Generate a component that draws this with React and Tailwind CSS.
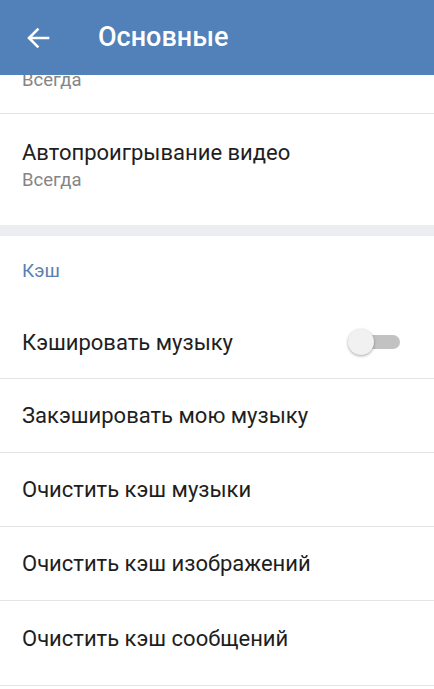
// App.jsx — экран настроек «Основные» (кэш)
import React from "react";

const font = { fontFamily: "Roboto, 'Noto Sans', sans-serif" };

function Row({ title, last }) {
  return (
    <div
      className={`flex h-[74px] items-center px-[22px] ${last ? "" : "border-b border-[#e3e4e6]"}`}
    >
      <span className="text-[22px] text-[#1e1e1e]">{title}</span>
    </div>
  );
}

function Toggle() {
  // выключенный переключатель в стиле Material
  return (
    <div className="relative h-[26px] w-[52px]">
      <div className="absolute left-[8px] top-[6px] h-[14px] w-[44px] rounded-full bg-[#c2c2c2]" />
      <div className="absolute left-0 top-0 h-[26px] w-[26px] rounded-full bg-[#f1f1f1] shadow-[0_1px_3px_rgba(0,0,0,0.35)]" />
    </div>
  );
}

export default function App() {
  return (
    <div className="h-[689px] w-[434px] overflow-hidden bg-white" style={font}>
      {/* Верхняя панель */}
      <div className="relative z-10 flex h-[75px] items-center bg-[#5181b8]">
        <svg
          className="ml-[26px]"
          width="24"
          height="24"
          viewBox="0 0 24 24"
          fill="none"
          stroke="white"
          strokeWidth="2.6"
          strokeLinecap="square"
        >
          <path d="M22 12H3.5M11.5 3.5 3 12l8.5 8.5" />
        </svg>
        <span className="ml-[48px] text-[27px] font-medium text-white">Основные</span>
      </div>

      {/* Частично прокрученная строка */}
      <div className="h-[39px] overflow-hidden border-b border-[#e3e4e6] px-[22px]">
        <div className="-mt-[8px] text-[18.5px] text-[#858585]">Всегда</div>
      </div>

      <div className="h-[111px] px-[22px] pt-[25px]">
        <div className="text-[22px] leading-[28px] text-[#1e1e1e]">Автопроигрывание видео</div>
        <div className="mt-[1px] text-[18.5px] leading-[24px] text-[#858585]">Всегда</div>
      </div>

      {/* Разделитель секций */}
      <div className="h-[11px] bg-[#ebedf0]" />

      {/* Секция «Кэш» */}
      <div className="flex h-[70px] items-center px-[22px]">
        <span className="text-[19px] text-[#5b80ad]">Кэш</span>
      </div>

      <div className="flex h-[73px] items-center justify-between border-b border-[#e3e4e6] pl-[22px] pr-[34px]">
        <span className="text-[22px] text-[#1e1e1e]">Кэшировать музыку</span>
        <Toggle />
      </div>
      <Row title="Закэшировать мою музыку" />
      <Row title="Очистить кэш музыки" />
      <Row title="Очистить кэш изображений" />
      <div className="flex h-[85px] items-center border-b border-[#e3e4e6] px-[22px] pb-[10px]">
        <span className="text-[22px] text-[#1e1e1e]">Очистить кэш сообщений</span>
      </div>
    </div>
  );
}
